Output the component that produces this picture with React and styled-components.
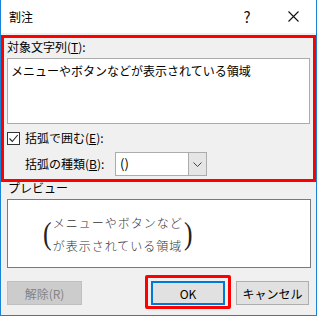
import React from "react";
import styled, { createGlobalStyle } from "styled-components";

const GlobalStyle = createGlobalStyle`
  html, body {
    margin: 0;
    padding: 0;
    background: #ffffff;
  }
  body {
    font-family: "Noto Sans CJK JP", "Noto Sans", sans-serif;
    font-size: 12px;
    color: #000;
  }
`;

const Window = styled.div`
  width: 317px;
  height: 316px;
  box-sizing: border-box;
  border: 1px solid #1883d7;
  border-top: none;
  background: #f0f0f0;
  display: flex;
  flex-direction: column;
`;

const TitleBar = styled.div`
  height: 33px;
  background: #ffffff;
  display: flex;
  align-items: center;
  padding-left: 8px;
`;

const Title = styled.div`
  flex: 1;
  font-size: 12px;
  line-height: 16px;
`;

const TitleButton = styled.div`
  width: 46px;
  height: 33px;
  display: flex;
  align-items: center;
  justify-content: center;
  font-size: 15px;
  color: #111;
`;

const Highlight = styled.div`
  margin-top: 2px;
  border: 3px solid #ff0000;
  padding: 1px 2px 3px 3px;
  display: flex;
  flex-direction: column;
`;

const Label = styled.div`
  line-height: 16px;
  height: 16px;
  white-space: nowrap;
  width: ${(p) => (p.$width ? `${p.$width}px` : "auto")};
`;

const TextBox = styled.div`
  margin-top: 3px;
  width: 303px;
  height: 66px;
  box-sizing: border-box;
  border: 1px solid #ababab;
  background: #ffffff;
  padding: 4px 3px;
  line-height: 16px;
`;

const Row = styled.div`
  display: flex;
  align-items: center;
  margin-top: ${(p) => p.$top}px;
  padding-left: ${(p) => p.$indent}px;
  height: ${(p) => p.$height}px;
`;

const CheckBox = styled.div`
  width: 13px;
  height: 13px;
  box-sizing: border-box;
  border: 1px solid #333333;
  background: #ffffff;
  display: flex;
  align-items: center;
  justify-content: center;
  margin-right: 5px;
`;

const Combo = styled.div`
  width: 92px;
  height: 24px;
  box-sizing: border-box;
  border: 1px solid #acacac;
  background: #ffffff;
  display: flex;
`;

const ComboText = styled.div`
  flex: 1;
  padding-left: 4px;
  line-height: 22px;
  font-size: 13px;
`;

const ComboButton = styled.div`
  width: 17px;
  border-left: 1px solid #acacac;
  background: #e5e5e5;
  display: flex;
  align-items: center;
  justify-content: center;
`;

const U = styled.span`
  text-decoration: underline;
  text-underline-offset: 1px;
`;

const PreviewLabel = styled.div`
  margin-left: 7px;
  line-height: 12px;
  height: 12px;
`;

const PreviewBox = styled.div`
  margin: 5px 0 0 6px;
  width: 304px;
  height: 69px;
  box-sizing: border-box;
  border: 1px solid #7a7a7a;
  background: #ffffff;
  display: flex;
  align-items: center;
  padding-left: 34px;
`;

const Paren = styled.div`
  font-family: "Liberation Serif", "DejaVu Serif", serif;
  font-size: 32px;
  line-height: 40px;
  transform: scaleX(0.8);
  margin-top: -2px;
  color: #222;
`;

const PreviewText = styled.div`
  font-family: "Noto Sans CJK JP", serif;
  font-size: 12px;
  line-height: 23px;
  letter-spacing: 1px;
  color: #333;
  margin-top: 1px;
  font-weight: 300;
`;

const ButtonRow = styled.div`
  margin-top: 7px;
  padding: 0 7px 0 6px;
  display: flex;
  align-items: flex-start;
`;

const Button = styled.div`
  width: ${(p) => p.$width}px;
  height: 24px;
  box-sizing: border-box;
  border: ${(p) => (p.$default ? "2px solid #0078d7" : "1px solid #adadad")};
  background: ${(p) => (p.$disabled ? "#cccccc" : "#e1e1e1")};
  color: ${(p) => (p.$disabled ? "#838383" : "#000")};
  border-color: ${(p) => (p.$disabled ? "#bfbfbf" : undefined)};
  display: flex;
  align-items: center;
  justify-content: center;
  font-size: 12px;
  margin-top: 6px;
`;

const ButtonHighlight = styled.div`
  margin-left: auto;
  border: 3px solid #ff0000;
  border-radius: 2px;
  padding: 3px 3px 1px 3px;
  & > div {
    margin-top: 0;
  }
`;

const CancelSlot = styled.div`
  margin-left: 5px;
`;

export default function App() {
  return (
    <>
      <GlobalStyle />
      <Window>
        <TitleBar>
          <Title>割注</Title>
          <TitleButton>?</TitleButton>
          <TitleButton>
            <svg width="11" height="11" viewBox="0 0 11 11">
              <path d="M0.5 0.5 L10.5 10.5 M10.5 0.5 L0.5 10.5" stroke="#111" strokeWidth="1.1" />
            </svg>
          </TitleButton>
        </TitleBar>

        <Highlight>
          <Label>
            対象文字列(<U>T</U>):
          </Label>
          <TextBox>メニューやボタンなどが表示されている領域</TextBox>
          <Row $top={6} $indent={0} $height={16}>
            <CheckBox>
              <svg width="11" height="11" viewBox="0 0 11 11">
                <path d="M1.5 5.5 L4.3 8.5 L9.7 2" fill="none" stroke="#222" strokeWidth="1.1" />
              </svg>
            </CheckBox>
            <Label>
              括弧で囲む(<U>E</U>):
            </Label>
          </Row>
          <Row $top={6} $indent={18} $height={24}>
            <Label $width={90}>
              括弧の種類(<U>B</U>):
            </Label>
            <Combo>
              <ComboText>()</ComboText>
              <ComboButton>
                <svg width="9" height="5" viewBox="0 0 9 5">
                  <path d="M0.5 0.5 L4.5 4.5 L8.5 0.5" fill="none" stroke="#444" strokeWidth="1" />
                </svg>
              </ComboButton>
            </Combo>
          </Row>
        </Highlight>

        <PreviewLabel>プレビュー</PreviewLabel>
        <PreviewBox>
          <Paren>(</Paren>
          <PreviewText>
            <div>メニューやボタンなど</div>
            <div>が表示されている領域</div>
          </PreviewText>
          <Paren>)</Paren>
        </PreviewBox>

        <ButtonRow>
          <Button $width={75} $disabled>
            解除(R)
          </Button>
          <ButtonHighlight>
            <Button $width={74} $default>
              OK
            </Button>
          </ButtonHighlight>
          <CancelSlot>
            <Button $width={73}>キャンセル</Button>
          </CancelSlot>
        </ButtonRow>
      </Window>
    </>
  );
}
